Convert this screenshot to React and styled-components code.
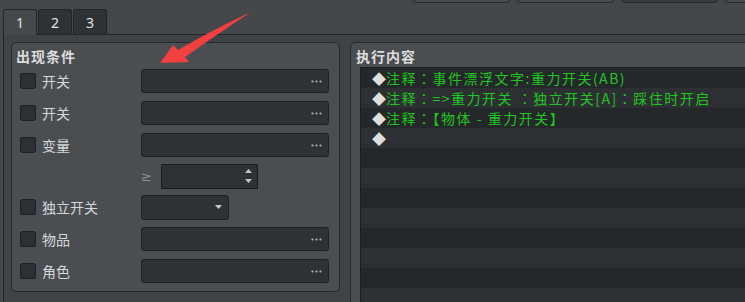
import styled, { createGlobalStyle } from "styled-components";

const GlobalStyle = createGlobalStyle`
  html, body {
    margin: 0;
    padding: 0;
    background: #45484b;
  }
  body {
    font-family: "Noto Sans CJK SC", "Noto Sans", sans-serif;
  }
`;

const Page = styled.div`
  position: relative;
  width: 745px;
  height: 302px;
  overflow: hidden;
  display: flex;
  flex-direction: column;
  background: #45484b;
`;

const TopStrip = styled.div`
  display: flex;
  align-items: flex-end;
  gap: 7px;
  height: 3px;
  padding-left: 413px;
  overflow: hidden;
  flex-shrink: 0;
`;

const TopButton = styled.div`
  flex: 0 0 97px;
  height: 20px;
  box-sizing: border-box;
  border: 1px solid #27292b;
  border-radius: 3px;
  background: ${(p) => (p.$pressed ? "#3a3d40" : "#484b4e")};
`;

const TabBar = styled.div`
  position: relative;
  z-index: 1;
  display: flex;
  align-items: flex-start;
  gap: 1px;
  height: 25px;
  margin: 6px 0 0 3px;
  flex-shrink: 0;
`;

const Tab = styled.div`
  width: 34px;
  height: ${(p) => (p.$active ? "26px" : "25px")};
  box-sizing: border-box;
  border: 1px solid #232527;
  border-bottom: none;
  border-radius: 3px 3px 0 0;
  background: ${(p) => (p.$active ? "#46494c" : "#2f3234")};
  color: #e2e2e2;
  font-family: "Noto Sans", sans-serif;
  font-size: 14px;
  display: flex;
  align-items: center;
  justify-content: center;
  padding-bottom: ${(p) => (p.$active ? "1px" : "0")};
`;

const Pane = styled.div`
  flex: 1;
  margin-left: 3px;
  border-top: 1px solid #232527;
  border-left: 1px solid #232527;
  background: #404346;
  padding: 7px 0 0 7px;
  display: flex;
  align-items: flex-start;
  gap: 10px;
`;

const GroupBox = styled.div`
  flex-shrink: 0;
  box-sizing: border-box;
  width: ${(p) => p.$width}px;
  height: ${(p) => p.$height}px;
  border: 1px solid #27292b;
  border-radius: 5px;
  background: #4b4e51;
`;

const GroupTitle = styled.div`
  height: ${(p) => p.$height}px;
  box-sizing: border-box;
  padding: 5px 0 0 ${(p) => p.$indent}px;
  line-height: 17px;
  font-size: 14px;
  font-weight: bold;
  letter-spacing: 1px;
  color: #dcdcdc;
`;

const ConditionGrid = styled.div`
  display: grid;
  grid-template-columns: 16px 93px 188px;
  grid-template-rows: 32px 32px 32px 30px 32px 32px 32px;
  column-gap: 6px;
  align-items: center;
  padding-left: 8px;
`;

const Checkbox = styled.div`
  width: 16px;
  height: 16px;
  box-sizing: border-box;
  border: 1px solid #1f2123;
  border-radius: 2px;
  background: #2d3032;
`;

const Label = styled.div`
  font-size: 14px;
  line-height: 16px;
  color: #d5d8db;
  white-space: nowrap;
`;

const Field = styled.div`
  width: ${(p) => p.$width}px;
  height: ${(p) => p.$height}px;
  box-sizing: border-box;
  border: 1px solid #1f2123;
  border-radius: 3px;
  background: #2f3234;
  display: flex;
  align-items: center;
  justify-content: flex-end;
  padding-right: 6px;
`;

const CompareCell = styled.div`
  grid-column: 3;
  display: flex;
  align-items: center;
`;

const CompareSign = styled.span`
  width: 9px;
  font-family: "DejaVu Sans", sans-serif;
  font-size: 13px;
  color: #8d9094;
`;

const SpinBox = styled.div`
  width: 97px;
  height: 25px;
  margin-left: 11px;
  box-sizing: border-box;
  border: 1px solid #1a1c1e;
  border-radius: 1px;
  background: #2f3234;
  display: flex;
  align-items: center;
  justify-content: flex-end;
  padding-right: 5px;
`;

const CommandList = styled.div`
  margin-left: 9px;
  border-top: 1px solid #1c1e20;
  border-left: 1px solid #1c1e20;
`;

const CommandRow = styled.div`
  height: 20px;
  line-height: 20px;
  padding-left: 11px;
  background: ${(p) => (p.$odd ? "#2d3032" : "#25282a")};
  font-family: "Noto Sans CJK TC", "Noto Sans CJK SC", sans-serif;
  font-size: 14px;
  letter-spacing: 1.5px;
  color: #20c620;
  white-space: nowrap;
`;

const Bullet = styled.span`
  color: #dedede;
  letter-spacing: 0;
`;

const Annotation = styled.svg`
  position: absolute;
  left: 150px;
  top: 5px;
  pointer-events: none;
`;

function Dots() {
  return (
    <svg width="11" height="3" viewBox="0 0 11 3">
      <circle cx="1.5" cy="1.5" r="1.1" fill="#b4b4b4" />
      <circle cx="5.5" cy="1.5" r="1.1" fill="#b4b4b4" />
      <circle cx="9.5" cy="1.5" r="1.1" fill="#b4b4b4" />
    </svg>
  );
}

function SpinArrows() {
  return (
    <svg width="7" height="14" viewBox="0 0 7 14">
      <polygon points="0,4 3.5,0 7,4" fill="#c4c4c4" />
      <polygon points="0,10 7,10 3.5,14" fill="#c4c4c4" />
    </svg>
  );
}

function ComboArrow() {
  return (
    <svg width="7" height="4" viewBox="0 0 7 4">
      <polygon points="0,0 7,0 3.5,4" fill="#c8c8c8" />
    </svg>
  );
}

const conditions = [
  { label: "开关", kind: "pick" },
  { label: "开关", kind: "pick" },
  { label: "变量", kind: "pick" },
  { kind: "compare" },
  { label: "独立开关", kind: "combo" },
  { label: "物品", kind: "pick" },
  { label: "角色", kind: "pick" },
];

const commands = [
  "注释：事件漂浮文字:重力开关(AB)",
  "注释：=>重力开关 ：独立开关[A]：踩住时开启",
  "注释：【物体 - 重力开关】",
  "",
];

function App() {
  const rows = Array.from({ length: 12 }, (_, i) => commands[i]);

  return (
    <>
      <GlobalStyle />
      <Page>
        <TopStrip>
          <TopButton />
          <TopButton />
          <TopButton $pressed />
          <TopButton />
        </TopStrip>

        <TabBar>
          <Tab $active>1</Tab>
          <Tab>2</Tab>
          <Tab>3</Tab>
        </TabBar>

        <Pane>
          <GroupBox $width={329} $height={250}>
            <GroupTitle $height={22} $indent={4}>
              出现条件
            </GroupTitle>
            <ConditionGrid>
              {conditions.map((c, i) =>
                c.kind === "compare" ? (
                  <CompareCell key={i}>
                    <CompareSign>≥</CompareSign>
                    <SpinBox>
                      <SpinArrows />
                    </SpinBox>
                  </CompareCell>
                ) : (
                  [
                    <Checkbox key={`c${i}`} />,
                    <Label key={`l${i}`}>{c.label}</Label>,
                    c.kind === "combo" ? (
                      <Field key={`f${i}`} $width={88} $height={25}>
                        <ComboArrow />
                      </Field>
                    ) : (
                      <Field key={`f${i}`} $width={188} $height={24}>
                        <Dots />
                      </Field>
                    ),
                  ]
                )
              )}
            </ConditionGrid>
          </GroupBox>

          <GroupBox $width={430} $height={290}>
            <GroupTitle $height={24} $indent={5}>
              执行内容
            </GroupTitle>
            <CommandList>
              {rows.map((text, i) => (
                <CommandRow key={i} $odd={i % 2 === 1}>
                  {text !== undefined && (
                    <>
                      <Bullet>◆</Bullet>
                      {text}
                    </>
                  )}
                </CommandRow>
              ))}
            </CommandList>
          </GroupBox>
        </Pane>

        <Annotation width="110" height="65" viewBox="150 5 110 65">
          <path
            d="M160,63 L173,45 L178,50 Q214,29 251,12 Q219,33 185,57 L189,62 Z"
            fill="#f23f3f"
          />
        </Annotation>
      </Page>
    </>
  );
}

export default App;
